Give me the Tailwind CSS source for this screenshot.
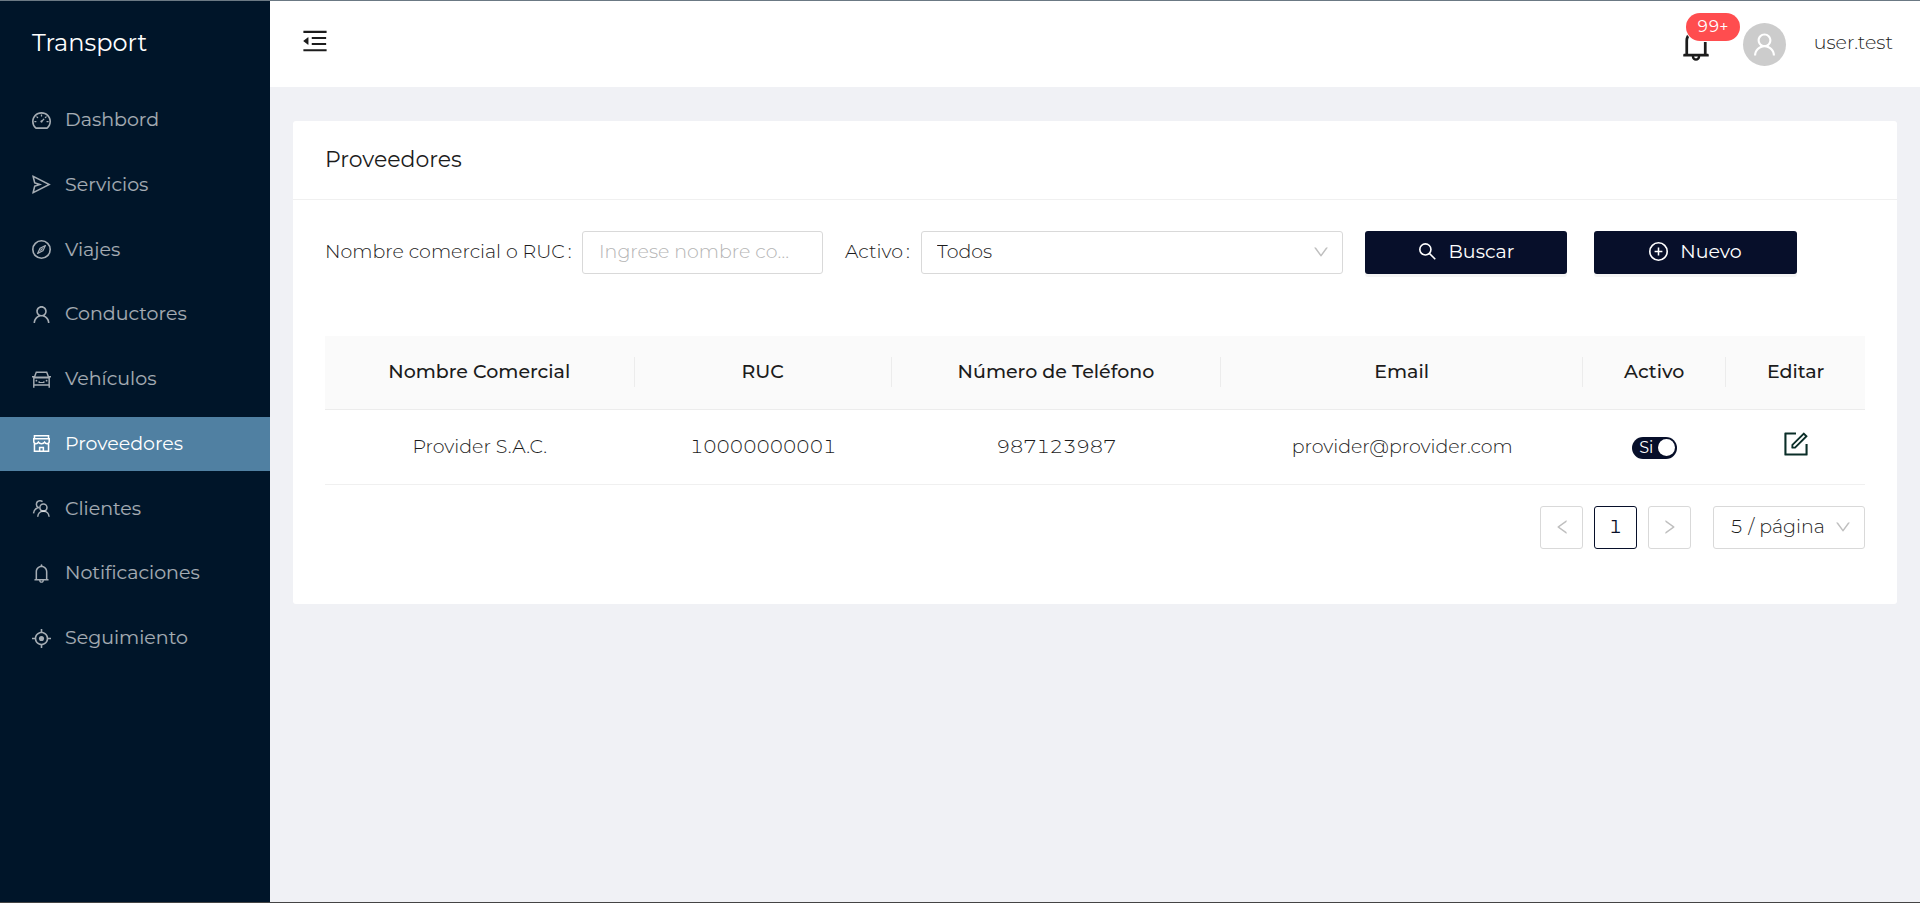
<!DOCTYPE html>
<html lang="es">
<head>
<meta charset="utf-8">
<meta name="viewport" content="width=device-width, initial-scale=1">
<title>Transport - Proveedores</title>
<script src="https://cdn.jsdelivr.net/npm/@tailwindcss/browser@4"></script>
</head>
<body class="flex min-h-screen border-t border-t-[#6b7984] border-b border-b-[#444444] bg-[#f0f1f5] font-['Montserrat','Inter',sans-serif] text-[19px] leading-[30px] font-light text-[#1c1c1c] tabular-nums">

<svg class="hidden" aria-hidden="true">
  <symbol id="i-dashboard" viewBox="64 64 896 896"><path d="M924.8 385.6a446.7 446.7 0 00-96-142.4 446.7 446.7 0 00-142.4-96C631.1 123.8 572.5 112 512 112s-119.1 11.8-174.4 35.2a446.7 446.7 0 00-142.4 96 446.7 446.7 0 00-96 142.4C75.8 440.9 64 499.5 64 560c0 132.7 58.3 257.7 159.9 343.1l1.7 1.4c5.8 4.8 13.1 7.5 20.6 7.5h531.7c7.5 0 14.8-2.7 20.6-7.5l1.7-1.4C901.7 817.7 960 692.7 960 560c0-60.5-11.9-119.1-35.2-174.4zM761.4 836H262.6A371.12 371.12 0 01140 560c0-99.4 38.7-192.8 109-263 70.3-70.3 163.7-109 263-109 99.4 0 192.8 38.7 263 109 70.3 70.3 109 163.7 109 263 0 105.6-44.5 205.5-122.6 276zM623.5 421.5a8.03 8.03 0 00-11.3 0L527.7 506c-18.7-5-39.4-.2-54.1 14.5a55.95 55.95 0 000 79.2 55.95 55.95 0 0079.2 0 55.87 55.87 0 0014.5-54.1l84.5-84.5c3.1-3.1 3.1-8.2 0-11.3l-28.3-28.3zM490 320h44c4.4 0 8-3.6 8-8v-80c0-4.4-3.6-8-8-8h-44c-4.4 0-8 3.6-8 8v80c0 4.4 3.6 8 8 8zm260 218v44c0 4.4 3.6 8 8 8h80c4.4 0 8-3.6 8-8v-44c0-4.4-3.6-8-8-8h-80c-4.4 0-8 3.6-8 8zm12.7-197.2l-31.1-31.1a8.03 8.03 0 00-11.3 0l-56.6 56.6a8.03 8.03 0 000 11.3l31.1 31.1c3.1 3.1 8.2 3.1 11.3 0l56.6-56.6c3.1-3.1 3.1-8.2 0-11.3zm-458.6-31.1a8.03 8.03 0 00-11.3 0l-31.1 31.1a8.03 8.03 0 000 11.3l56.6 56.6c3.1 3.1 8.2 3.1 11.3 0l31.1-31.1c3.1-3.1 3.1-8.2 0-11.3l-56.6-56.6zM262 530h-80c-4.4 0-8 3.6-8 8v44c0 4.4 3.6 8 8 8h80c4.4 0 8-3.6 8-8v-44c0-4.4-3.6-8-8-8z"/></symbol>
  <symbol id="i-send" viewBox="64 64 896 896"><path d="M931.4 498.9L94.9 79.5c-3.4-1.7-7.3-2.1-11-1.2a15.99 15.99 0 00-11.7 19.3l86.2 352.2c1.3 5.3 5.2 9.6 10.4 11.3l147.7 50.7-147.6 50.7c-5.2 1.8-9.1 6-10.3 11.3L72.2 926.5c-.9 3.7-.5 7.6 1.2 10.9 3.9 7.9 13.5 11.1 21.5 7.2l836.5-417c3.1-1.5 5.6-4.1 7.2-7.1 3.9-8 .7-17.6-7.2-21.6zM170.8 826.3l50.3-205.6 295.2-101.3c2.3-.8 4.2-2.6 5-5 1.4-4.2-.8-8.7-5-10.2L221.1 403 171 198.2l628 314.9-628.2 313.2z"/></symbol>
  <symbol id="i-compass" viewBox="64 64 896 896"><g fill="none" stroke="currentColor"><circle cx="512" cy="512" r="410" stroke-width="76"/><path d="M696 328L580 570 328 696l116-242z" stroke-width="60" stroke-linejoin="round"/><path d="M458 566l108-108" stroke-width="60"/></g></symbol>
  <symbol id="i-user" viewBox="64 64 896 896"><path d="M858.5 763.6a374 374 0 00-80.6-119.5 375.63 375.63 0 00-119.5-80.6c-.4-.2-.8-.3-1.2-.5C719.5 518 760 444.7 760 362c0-137-111-248-248-248S264 225 264 362c0 82.7 40.5 156 102.8 201.1-.4.2-.8.3-1.2.5-44.8 18.9-85 46-119.5 80.6a375.63 375.63 0 00-80.6 119.5A371.7 371.7 0 00136 901.8a8 8 0 008 8.2h60c4.4 0 7.9-3.5 8-7.8 2-77.2 33-149.5 87.8-204.3 56.7-56.7 132-87.9 212.2-87.9s155.5 31.2 212.2 87.9C779 752.7 810 825 812 902.2c.1 4.4 3.6 7.8 8 7.8h60a8 8 0 008-8.2c-1-47.8-10.9-94.3-29.5-138.2zM512 534c-45.9 0-89.1-17.9-121.6-50.4S340 407.9 340 362c0-45.9 17.9-89.1 50.4-121.6S466.1 190 512 190s89.1 17.9 121.6 50.4S684 316.1 684 362c0 45.9-17.9 89.1-50.4 121.6S557.9 534 512 534z"/></symbol>
  <symbol id="i-car" viewBox="64 64 896 896"><g fill="none" stroke="currentColor" stroke-width="68"><path d="M64 380h96M864 380h96M176 404l90-234h492l90 234M150 430h724v342H150zM176 402h672M148 780v120M876 780v120"/><path d="M400 600v54h224v-54" stroke-width="56"/></g><circle cx="272" cy="566" r="42"/><circle cx="752" cy="566" r="42"/></symbol>
  <symbol id="i-shop" viewBox="64 64 896 896"><g fill="none" stroke="currentColor" stroke-width="72"><path d="M180 290V148h664v142M180 540v336h664V540M148 290h728v130c0 62-46 104-106 104-54 0-90-30-112-72-24 42-64 72-146 72s-122-30-146-72c-22 42-58 72-112 72-60 0-106-42-106-104z"/><path d="M424 876V704h176v172"/></g></symbol>
  <symbol id="i-clients" viewBox="64 64 896 896"><g fill="none" stroke="currentColor" stroke-width="72"><circle cx="602" cy="468" r="168"/><path d="M334 902c6-150 118-266 268-266s262 116 268 266M560 190c-40-34-82-46-130-40-92 12-158 84-158 170 0 70 38 126 96 158M394 470c-140 26-246 130-258 270"/></g></symbol>
  <symbol id="i-bell" viewBox="64 64 896 896"><path d="M816 768h-24V428c0-141.1-104.3-257.8-240-277.2V112c0-22.1-17.9-40-40-40s-40 17.9-40 40v38.8C336.3 170.2 232 286.9 232 428v340h-24c-17.7 0-32 14.3-32 32v32c0 4.4 3.6 8 8 8h216c0 61.8 50.2 112 112 112s112-50.2 112-112h216c4.4 0 8-3.6 8-8v-32c0-17.7-14.3-32-32-32zM512 888c-26.5 0-48-21.5-48-48h96c0 26.5-21.5 48-48 48zM304 768V428c0-55.6 21.6-107.8 60.9-147.1S456.4 220 512 220c55.6 0 107.8 21.6 147.1 60.9S720 372.4 720 428v340H304z"/></symbol>
  <symbol id="i-aim" viewBox="64 64 896 896"><path d="M952 474H829.8C812.5 327.6 696.4 211.5 550 194.2V72c0-4.4-3.6-8-8-8h-60c-4.4 0-8 3.6-8 8v122.2C327.6 211.5 211.5 327.6 194.2 474H72c-4.4 0-8 3.6-8 8v60c0 4.4 3.6 8 8 8h122.2C211.5 696.4 327.6 812.5 474 829.8V952c0 4.4 3.6 8 8 8h60c4.4 0 8-3.6 8-8V829.8C696.4 812.5 812.5 696.4 829.8 550H952c4.4 0 8-3.6 8-8v-60c0-4.4-3.6-8-8-8zM512 756c-134.8 0-244-109.2-244-244s109.2-244 244-244 244 109.2 244 244-109.2 244-244 244z"/><circle cx="512" cy="512" r="120"/></symbol>
  <symbol id="i-fold" viewBox="64 64 896 896"><path d="M408 442h480c4.4 0 8-3.6 8-8v-56c0-4.4-3.6-8-8-8H408c-4.4 0-8 3.6-8 8v56c0 4.4 3.6 8 8 8zm-8 204c0 4.4 3.6 8 8 8h480c4.4 0 8-3.6 8-8v-56c0-4.4-3.6-8-8-8H408c-4.4 0-8 3.6-8 8v56zm504-486H120c-4.4 0-8 3.6-8 8v56c0 4.4 3.6 8 8 8h784c4.4 0 8-3.6 8-8v-56c0-4.4-3.6-8-8-8zm0 632H120c-4.4 0-8 3.6-8 8v56c0 4.4 3.6 8 8 8h784c4.4 0 8-3.6 8-8v-56c0-4.4-3.6-8-8-8zM115.4 518.9L271.7 642c5.8 4.6 14.4.5 14.4-6.9V388.9c0-7.4-8.5-11.5-14.4-6.9L115.4 505.1a8.74 8.74 0 000 13.8z"/></symbol>
  <symbol id="i-down" viewBox="64 64 896 896"><path d="M884 256h-75c-5.1 0-9.9 2.5-12.9 6.6L512 654.2 227.9 262.6c-3-4.1-7.8-6.6-12.9-6.6h-75c-6.5 0-10.3 7.4-6.5 12.7l352.6 486.1c12.8 17.6 39 17.6 51.7 0l352.6-486.1c3.9-5.3.1-12.7-6.4-12.7z"/></symbol>
  <symbol id="i-search" viewBox="64 64 896 896"><g fill="none" stroke="currentColor" stroke-width="76"><circle cx="412" cy="412" r="262"/><path d="M598 598l280 280"/></g></symbol>
  <symbol id="i-plus" viewBox="64 64 896 896"><g fill="none" stroke="currentColor"><circle cx="512" cy="512" r="410" stroke-width="76"/><path d="M512 328v368M328 512h368" stroke-width="72"/></g></symbol>
  <symbol id="i-form" viewBox="64 64 896 896"><path d="M904 512h-56c-4.4 0-8 3.6-8 8v320H184V184h320c4.4 0 8-3.6 8-8v-56c0-4.4-3.6-8-8-8H144c-17.7 0-32 14.3-32 32v736c0 17.7 14.3 32 32 32h736c17.7 0 32-14.3 32-32V520c0-4.4-3.6-8-8-8z"/><path d="M355.9 534.9L354 653.8c-.1 8.9 7.1 16.2 16 16.2h.4l118-2.9c2-.1 4-.9 5.4-2.3l415.9-415c3.1-3.1 3.1-8.2 0-11.3L785.4 114.3c-1.6-1.6-3.6-2.3-5.7-2.3s-4.1.8-5.7 2.3l-415.8 415a8.3 8.3 0 00-2.3 5.6zm63.5 23.6L779.7 199l45.2 45.1-360.5 359.7-45.7 1.1.7-46.4z"/></symbol>
</svg>

<aside class="w-[270px] shrink-0 bg-[#001529] text-white/65">
  <h1 class="px-8 pt-6 pb-8 text-[24px] leading-9 font-normal text-white">Transport</h1>
  <nav class="flex h-[572px] flex-col justify-between font-normal">
    <a href="#" class="flex h-[54px] items-center gap-[14px] px-8"><svg class="size-[19px] fill-current"><use href="#i-dashboard"/></svg>Dashbord</a>
    <a href="#" class="flex h-[54px] items-center gap-[14px] px-8"><svg class="size-[19px] fill-current"><use href="#i-send"/></svg>Servicios</a>
    <a href="#" class="flex h-[54px] items-center gap-[14px] px-8"><svg class="size-[19px] fill-current"><use href="#i-compass"/></svg>Viajes</a>
    <a href="#" class="flex h-[54px] items-center gap-[14px] px-8"><svg class="size-[19px] fill-current"><use href="#i-user"/></svg>Conductores</a>
    <a href="#" class="flex h-[54px] items-center gap-[14px] px-8"><svg class="size-[19px] fill-current"><use href="#i-car"/></svg>Vehículos</a>
    <a href="#" aria-current="page" class="flex h-[54px] items-center gap-[14px] bg-[#5080a2] px-8 text-white"><svg class="size-[19px] fill-current"><use href="#i-shop"/></svg>Proveedores</a>
    <a href="#" class="flex h-[54px] items-center gap-[14px] px-8"><svg class="size-[19px] fill-current"><use href="#i-clients"/></svg>Clientes</a>
    <a href="#" class="flex h-[54px] items-center gap-[14px] px-8"><svg class="size-[19px] fill-current"><use href="#i-bell"/></svg>Notificaciones</a>
    <a href="#" class="flex h-[54px] items-center gap-[14px] px-8"><svg class="size-[19px] fill-current"><use href="#i-aim"/></svg>Seguimiento</a>
  </nav>
</aside>

<div class="min-w-0 flex-1">
  <header class="flex h-[86px] items-center justify-between bg-white pr-[27px] pl-8">
    <button type="button" aria-label="Contraer menú" class="pb-[6px]"><svg class="size-[26px] fill-current"><use href="#i-fold"/></svg></button>
    <div class="flex items-center">
      <button type="button" aria-label="Notificaciones" class="relative mr-[30px]">
        <svg class="size-[34px] fill-current"><use href="#i-bell"/></svg>
        <span class="absolute -top-[14px] left-[7px] h-7 w-[54px] rounded-full bg-[#ff4d4f] text-center text-[16px] leading-7 font-normal text-white ring-1 ring-white">99+</span>
      </button>
      <span class="flex size-[43px] items-center justify-center rounded-full bg-[#cccccc] text-white"><svg class="size-[25px] fill-current"><use href="#i-user"/></svg></span>
      <span class="ml-7 pb-[2px]">user.test</span>
    </div>
  </header>

  <main class="px-[23px] pt-[34px]">
    <section class="rounded-[3px] bg-white pb-[55px]">
      <h2 class="border-b border-[#f0f0f0] px-8 py-6 text-[22px] leading-[30px] font-normal">Proveedores</h2>

      <div class="px-8 pt-[31px]">
        <form class="grid grid-cols-[498fr_498fr_207fr_203fr_46fr] gap-x-[22px]" onsubmit="return false">
          <div class="flex items-center">
            <label for="q" class="flex flex-1 gap-[3px] pb-[2px] whitespace-nowrap">Nombre comercial o RUC<span>:</span></label>
            <input id="q" type="text" placeholder="Ingrese nombre comercial o RUC" class="h-[43px] w-[241px] rounded-[3px] border border-[#d9d9d9] px-4 pb-[2px] font-light text-ellipsis placeholder:text-[#b4b4b4]">
          </div>
          <div class="flex items-center">
            <label for="activo" class="flex w-[76px] gap-[3px] pb-[2px] whitespace-nowrap">Activo<span>:</span></label>
            <div class="relative flex-1">
              <select id="activo" class="h-[43px] w-full appearance-none rounded-[3px] border border-[#d9d9d9] bg-white px-[15px] pb-[2px] font-light"><option>Todos</option><option>Si</option><option>No</option></select>
              <svg class="pointer-events-none absolute top-[13px] right-[14px] size-4 fill-[#bfbfbf]"><use href="#i-down"/></svg>
            </div>
          </div>
          <button type="submit" class="mr-[5px] flex h-[43px] items-center justify-center gap-3 rounded-[3px] bg-[#070f2a] pb-[2px] font-normal text-white shadow-[0_3px_0_rgba(0,0,0,0.045)]"><svg class="size-[19px] fill-current"><use href="#i-search"/></svg>Buscar</button>
          <button type="button" class="flex h-[43px] items-center justify-center gap-3 rounded-[3px] bg-[#070f2a] pb-[2px] font-normal text-white shadow-[0_3px_0_rgba(0,0,0,0.045)]"><svg class="size-[19px] fill-current"><use href="#i-plus"/></svg>Nuevo</button>
        </form>

        <table class="mt-[62px] w-full table-fixed text-center">
          <colgroup><col class="w-[20.1%]"><col class="w-[16.7%]"><col class="w-[21.4%]"><col class="w-[23.5%]"><col class="w-[9.3%]"><col class="w-[9%]"></colgroup>
          <thead>
            <tr class="h-[73px] border-b border-[#ececec] bg-[#fafafa]">
              <th scope="col" class="p-0 font-medium"><div class="border-r border-[#ececec]">Nombre Comercial</div></th>
              <th scope="col" class="p-0 font-medium"><div class="border-r border-[#ececec]">RUC</div></th>
              <th scope="col" class="p-0 font-medium"><div class="border-r border-[#ececec]">Número de Teléfono</div></th>
              <th scope="col" class="p-0 font-medium"><div class="border-r border-[#ececec]">Email</div></th>
              <th scope="col" class="p-0 font-medium"><div class="border-r border-[#ececec]">Activo</div></th>
              <th scope="col" class="p-0 font-medium">Editar</th>
            </tr>
          </thead>
          <tbody>
            <tr class="h-[75px] border-b border-[#f0f0f0]">
              <td>Provider S.A.C.</td>
              <td>10000000001</td>
              <td>987123987</td>
              <td>provider@provider.com</td>
              <td>
                <label class="inline-flex h-[22px] w-[45px] items-center justify-between rounded-full bg-[#070f2a] pr-[2px] pl-[7px] align-middle text-[16px] leading-[22px] font-normal text-white">
                  <input type="checkbox" role="switch" checked class="sr-only">Si<span class="size-[17px] rounded-full bg-white shadow-sm"></span>
                </label>
              </td>
              <td><button type="button" aria-label="Editar" class="pb-[6px] align-middle"><svg class="size-[26px] fill-[#0a2e28]"><use href="#i-form"/></svg></button></td>
            </tr>
          </tbody>
        </table>

        <div class="mt-[21px] flex justify-end gap-[11px]">
          <button type="button" aria-label="Anterior" disabled class="flex size-[43px] items-center justify-center rounded-[3px] border border-[#d9d9d9]"><svg class="size-4 rotate-90 fill-[#bfbfbf]"><use href="#i-down"/></svg></button>
          <button type="button" aria-current="page" class="size-[43px] rounded-[3px] border border-[#070f2a] font-normal text-[#070f2a]">1</button>
          <button type="button" aria-label="Siguiente" disabled class="flex size-[43px] items-center justify-center rounded-[3px] border border-[#d9d9d9]"><svg class="size-4 -rotate-90 fill-[#bfbfbf]"><use href="#i-down"/></svg></button>
          <div class="relative ml-[11px] w-[152px]">
            <select aria-label="Tamaño de página" class="h-[43px] w-full appearance-none rounded-[3px] border border-[#d9d9d9] bg-white pl-4 font-light"><option>5 / página</option><option>10 / página</option></select>
            <svg class="pointer-events-none absolute top-[13px] right-[14px] size-4 fill-[#bfbfbf]"><use href="#i-down"/></svg>
          </div>
        </div>
      </div>
    </section>
  </main>
</div>
</body>
</html>
